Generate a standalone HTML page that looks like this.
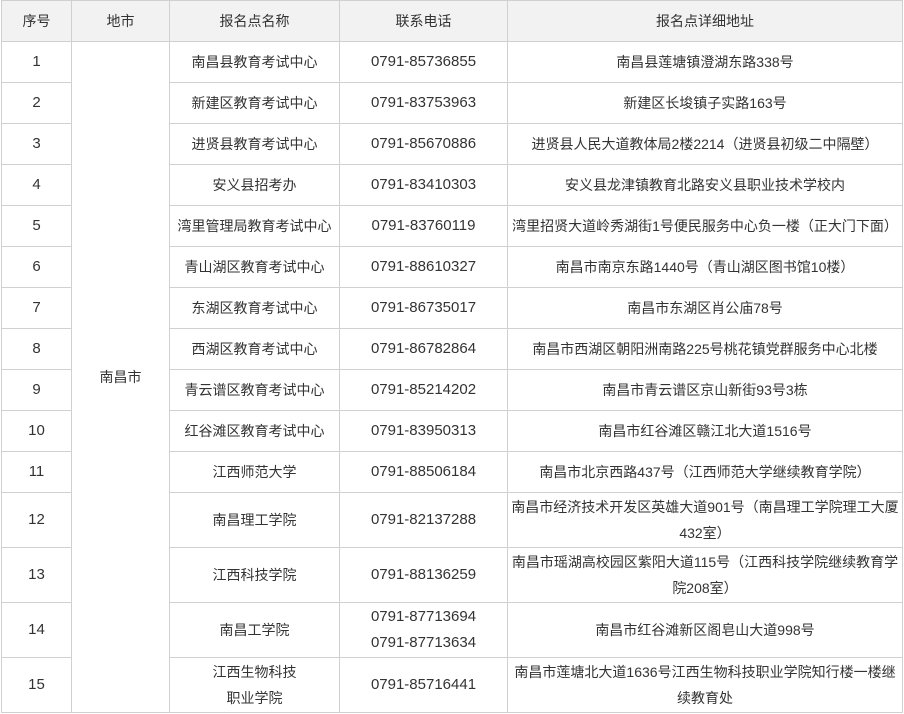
<!DOCTYPE html>
<html><head><meta charset="utf-8"><style>
body{margin:0;background:#fff;}
table{position:absolute;left:1px;top:0;border-collapse:collapse;table-layout:fixed;width:901px;font-family:"Liberation Sans","Noto Sans CJK SC",sans-serif;font-size:14px;color:#333;}
td,th{border:1px solid #d0d0d0;text-align:center;padding:0 2px;font-weight:normal;line-height:26px;}
th{background:#f2f2f2;height:40px;}
tr.r td{height:40px;}
tr.t td{height:54px;}
.n{font-size:15px;}
</style></head><body>
<table>
<colgroup><col style="width:70px"><col style="width:98px"><col style="width:170px"><col style="width:168px"><col style="width:395px"></colgroup>
<tr><th>序号</th><th>地市</th><th>报名点名称</th><th>联系电话</th><th>报名点详细地址</th></tr>
<tr class="r"><td class="n">1</td><td rowspan="15">南昌市</td><td>南昌县教育考试中心</td><td class="n">0791-85736855</td><td>南昌县莲塘镇澄湖东路338号</td></tr>
<tr class="r"><td class="n">2</td><td>新建区教育考试中心</td><td class="n">0791-83753963</td><td>新建区长埈镇子实路163号</td></tr>
<tr class="r"><td class="n">3</td><td>进贤县教育考试中心</td><td class="n">0791-85670886</td><td>进贤县人民大道教体局2楼2214（进贤县初级二中隔壁）</td></tr>
<tr class="r"><td class="n">4</td><td>安义县招考办</td><td class="n">0791-83410303</td><td>安义县龙津镇教育北路安义县职业技术学校内</td></tr>
<tr class="r"><td class="n">5</td><td>湾里管理局教育考试中心</td><td class="n">0791-83760119</td><td>湾里招贤大道岭秀湖街1号便民服务中心负一楼（正大门下面）</td></tr>
<tr class="r"><td class="n">6</td><td>青山湖区教育考试中心</td><td class="n">0791-88610327</td><td>南昌市南京东路1440号（青山湖区图书馆10楼）</td></tr>
<tr class="r"><td class="n">7</td><td>东湖区教育考试中心</td><td class="n">0791-86735017</td><td>南昌市东湖区肖公庙78号</td></tr>
<tr class="r"><td class="n">8</td><td>西湖区教育考试中心</td><td class="n">0791-86782864</td><td>南昌市西湖区朝阳洲南路225号桃花镇党群服务中心北楼</td></tr>
<tr class="r"><td class="n">9</td><td>青云谱区教育考试中心</td><td class="n">0791-85214202</td><td>南昌市青云谱区京山新街93号3栋</td></tr>
<tr class="r"><td class="n">10</td><td>红谷滩区教育考试中心</td><td class="n">0791-83950313</td><td>南昌市红谷滩区赣江北大道1516号</td></tr>
<tr class="r"><td class="n">11</td><td>江西师范大学</td><td class="n">0791-88506184</td><td>南昌市北京西路437号（江西师范大学继续教育学院）</td></tr>
<tr class="t"><td class="n">12</td><td>南昌理工学院</td><td class="n">0791-82137288</td><td>南昌市经济技术开发区英雄大道901号（南昌理工学院理工大厦432室）</td></tr>
<tr class="t"><td class="n">13</td><td>江西科技学院</td><td class="n">0791-88136259</td><td>南昌市瑶湖高校园区紫阳大道115号（江西科技学院继续教育学院208室）</td></tr>
<tr class="t"><td class="n">14</td><td>南昌工学院</td><td class="n">0791-87713694<br>0791-87713634</td><td>南昌市红谷滩新区阁皂山大道998号</td></tr>
<tr class="t"><td class="n">15</td><td>江西生物科技<br>职业学院</td><td class="n">0791-85716441</td><td>南昌市莲塘北大道1636号江西生物科技职业学院知行楼一楼继续教育处</td></tr>
</table>
</body></html>
